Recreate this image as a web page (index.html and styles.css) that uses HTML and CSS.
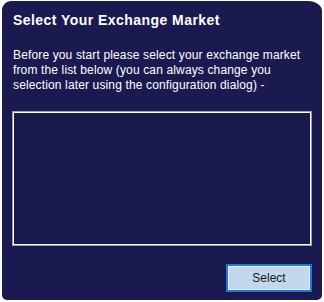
FILE: index.html
```html
<!DOCTYPE html>
<html>
<head>
<meta charset="utf-8">
<link rel="stylesheet" href="styles.css">
</head>
<body>
<div class="panel">
  <h1 class="title">Select Your Exchange Market</h1>
  <p class="intro">Before you start please select your exchange market from the list below (you can always change you selection later using the configuration dialog) -</p>
  <div class="listbox"></div>
  <div class="actions">
    <button class="btn">Select</button>
  </div>
</div>
</body>
</html>
```
FILE: styles.css
```css
html, body {
  margin: 0;
  padding: 0;
  background: #ffffff;
}
body {
  width: 324px;
  height: 302px;
  overflow: hidden;
}
.panel {
  box-sizing: border-box;
  margin: 1px 0 0 2px;
  width: 320px;
  height: 299px;
  background: #1b1a50;
  border-radius: 9px 14px 5px 5px / 9px 10px 5px 5px;
  padding: 11px 10px 0 10px;
  display: flex;
  flex-direction: column;
  font-family: "Liberation Sans", Arial, sans-serif;
  color: #ffffff;
}
.title {
  margin: 0 0 0 1px;
  font-size: 14px;
  line-height: 16px;
  font-weight: bold;
  letter-spacing: 0.45px;
}
.intro {
  margin: 20px 0 0 1px;
  font-size: 12px;
  line-height: 15px;
  letter-spacing: 0.14px;
}
.listbox {
  box-sizing: border-box;
  margin-top: 18px;
  height: 135px;
  border: 1px solid #a0a0a0;
  box-shadow: inset 0 0 0 1px #ffffff;
  background: #1b1a50;
}
.actions {
  margin-top: 18px;
  display: flex;
  justify-content: flex-end;
}
.btn {
  box-sizing: border-box;
  width: 86px;
  height: 28px;
  border: 2px solid #1e7ad6;
  box-shadow: inset 0 0 0 1px #e6eef6;
  background: #c2d8ee;
  color: #1a1a1a;
  font-family: "Liberation Sans", Arial, sans-serif;
  font-size: 12px;
  padding: 0;
}
```
